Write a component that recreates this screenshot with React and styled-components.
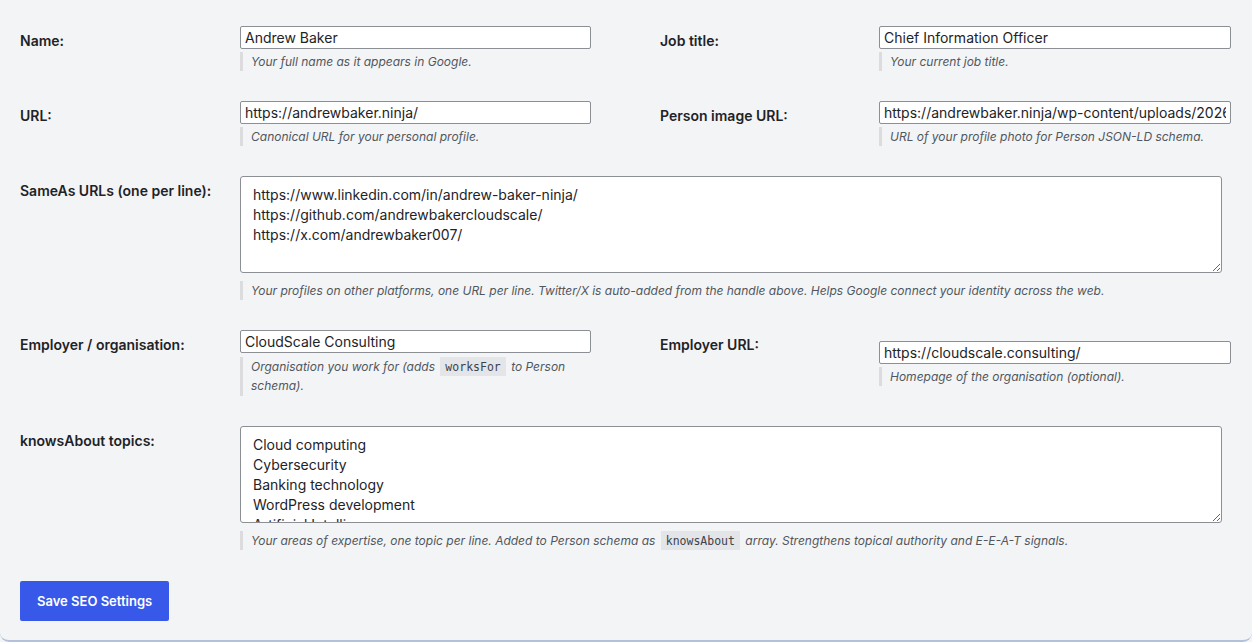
import React from 'react';
import styled, { createGlobalStyle } from 'styled-components';

const GlobalStyle = createGlobalStyle`
  html, body {
    margin: 0;
    padding: 0;
    background: #f3f4f6;
  }
  body {
    font-family: Inter, Roboto, "Liberation Sans", Arial, sans-serif;
    color: #1d2327;
  }
`;

const SCard = styled.form`
  box-sizing: border-box;
  width: 1252px;
  height: 642px;
  padding: 11px 21px 0 20px;
  background: #f3f4f6;
  border-bottom: 2px solid #b3c2da;
  border-radius: 0 0 9px 9px;
`;

const SRow = styled.div`
  display: grid;
  grid-template-columns: 220px 351px 69px 219px 1fr;
  align-items: center;
  padding: 15px 0;
`;

const SLabel = styled.label`
  align-self: start;
  margin-top: 5px;
  font-size: 14px;
  line-height: 20px;
  font-weight: 600;
  color: #1d2327;
`;

const SField = styled.div`
  display: flex;
  flex-direction: column;
  grid-column: ${p => (p.wide ? '2 / -1' : 'auto')};
`;

const SInput = styled.input`
  box-sizing: border-box;
  width: 100%;
  height: 23px;
  margin: 0;
  padding: 0 4px;
  border: 1px solid #8c8f94;
  border-radius: 2px;
  background: #fff;
  font-family: inherit;
  font-size: 14px;
  color: #1d2327;
  outline: none;
`;

const STextArea = styled.textarea`
  display: block;
  box-sizing: border-box;
  width: 982px;
  height: 97px;
  margin: 0;
  padding: 8px 12px;
  border: 1px solid #8c8f94;
  border-radius: 3px;
  background: #fff;
  font-family: inherit;
  font-size: 14px;
  line-height: 20px;
  color: #1d2327;
  overflow: hidden;
  resize: vertical;
  outline: none;
`;

const SHint = styled.p`
  margin: ${p => (p.afterArea ? '8px' : p.multi ? '4px' : '3px')} 0 0;
  padding: 0 0 ${p => (p.multi ? '1px' : '0')} 8px;
  border-left: 3px solid #dcdcde;
  font-size: 12px;
  line-height: 19px;
  font-style: italic;
  color: #50575e;
`;

const SCode = styled.code`
  padding: 3px 5px 2px;
  margin: 0 2px;
  background: #e3e5e8;
  font-family: "DejaVu Sans Mono", "Liberation Mono", monospace;
  font-style: normal;
  font-size: 11.5px;
  line-height: 15px;
  color: #3c434a;
`;

const SButton = styled.button`
  margin-top: 16px;
  height: 40px;
  padding: 0 17px;
  border: none;
  border-radius: 2px;
  background: #3858e9;
  color: #fff;
  font-family: inherit;
  font-size: 13px;
  font-weight: 600;
  cursor: pointer;
`;

const sameAs = [
  'https://www.linkedin.com/in/andrew-baker-ninja/',
  'https://github.com/andrewbakercloudscale/',
  'https://x.com/andrewbaker007/'
].join('\n');

const topics = [
  'Cloud computing',
  'Cybersecurity',
  'Banking technology',
  'WordPress development',
  'Artificial Intelligence'
].join('\n');

function Pair({ label, value, hint, multi }) {
  return (
    <>
      <SLabel>{label}</SLabel>
      <SField>
        <SInput defaultValue={value} />
        <SHint multi={multi}>{hint}</SHint>
      </SField>
    </>
  );
}

export default function App() {
  return (
    <>
      <GlobalStyle />
      <SCard onSubmit={e => e.preventDefault()}>
        <SRow>
          <Pair label="Name:" value="Andrew Baker" hint="Your full name as it appears in Google." />
          <span />
          <Pair label="Job title:" value="Chief Information Officer" hint="Your current job title." />
        </SRow>
        <SRow>
          <Pair label="URL:" value="https://andrewbaker.ninja/" hint="Canonical URL for your personal profile." />
          <span />
          <Pair
            label="Person image URL:"
            value="https://andrewbaker.ninja/wp-content/uploads/2026/02/andrew-baker.jpg"
            hint="URL of your profile photo for Person JSON-LD schema."
          />
        </SRow>
        <SRow>
          <SLabel>SameAs URLs (one per line):</SLabel>
          <SField wide>
            <STextArea defaultValue={sameAs} />
            <SHint afterArea>
              Your profiles on other platforms, one URL per line. Twitter/X is auto-added from the handle above. Helps
              Google connect your identity across the web.
            </SHint>
          </SField>
        </SRow>
        <SRow>
          <Pair
            label="Employer / organisation:"
            value="CloudScale Consulting"
            multi
            hint={
              <>
                Organisation you work for (adds <SCode>worksFor</SCode> to Person schema).
              </>
            }
          />
          <span />
          <Pair label="Employer URL:" value="https://cloudscale.consulting/" hint="Homepage of the organisation (optional)." />
        </SRow>
        <SRow>
          <SLabel>knowsAbout topics:</SLabel>
          <SField wide>
            <STextArea defaultValue={topics} />
            <SHint afterArea>
              Your areas of expertise, one topic per line. Added to Person schema as <SCode>knowsAbout</SCode> array.
              Strengthens topical authority and E-E-A-T signals.
            </SHint>
          </SField>
        </SRow>
        <SButton type="submit">Save SEO Settings</SButton>
      </SCard>
    </>
  );
}
